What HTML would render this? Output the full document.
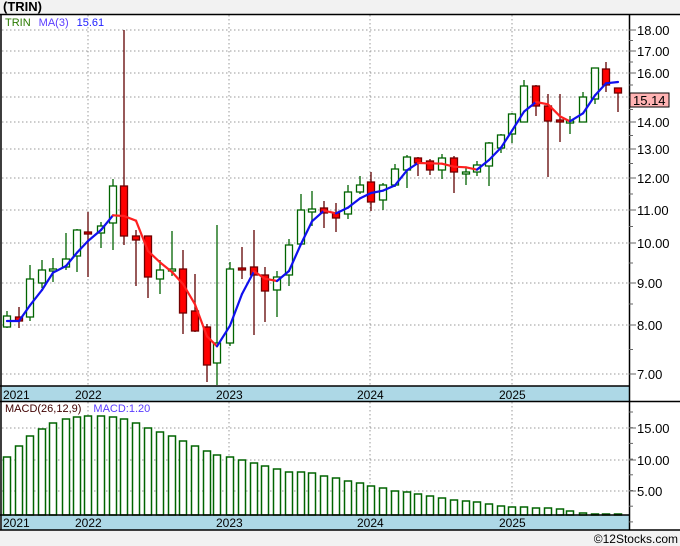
<!DOCTYPE html>
<html><head><meta charset="utf-8"><style>
body{margin:0;background:#f2f2f2;width:680px;height:546px;overflow:hidden;font-family:"Liberation Sans",sans-serif}
svg{position:absolute;left:0;top:0}
</style></head><body>
<svg id="s" width="680" height="546" xmlns="http://www.w3.org/2000/svg" font-family="Liberation Sans, sans-serif">
<rect x="0" y="0" width="680" height="14" fill="#f2f2f2"/>
<text x="3" y="11" font-size="13" font-weight="bold" fill="#000">(TRIN)</text>
<rect x="1" y="14" width="679" height="516" fill="#fff"/>
<g id="grid" stroke="#999" stroke-dasharray="1.5,2.5" stroke-width="1"></g>
<rect x="2" y="386" width="627" height="15" fill="#add8e6"/>
<rect x="2" y="515" width="627" height="15" fill="#add8e6"/>
<g id="bars"></g>
<g id="candles"></g>
<g id="ma"></g>
<g stroke="#000" stroke-width="1.5" fill="none">
<line x1="0" y1="14.5" x2="680" y2="14.5"/>
<line x1="1" y1="14" x2="1" y2="530"/>
<line x1="629.5" y1="14" x2="629.5" y2="530"/>
<line x1="0" y1="386" x2="629" y2="386"/>
<line x1="0" y1="401.5" x2="680" y2="401.5"/>
<line x1="0" y1="515" x2="629" y2="515"/>
<line x1="0" y1="530" x2="680" y2="530"/>
</g>
<g id="ticks" stroke="#666" stroke-width="1"></g>
<g font-size="13" fill="#000" id="labels"></g>
<g font-size="12" fill="#000">
<text x="3" y="399">2021</text><text x="75" y="399">2022</text><text x="216" y="399">2023</text><text x="357" y="399">2024</text><text x="499" y="399">2025</text>
<text x="3" y="527">2021</text><text x="75" y="527">2022</text><text x="216" y="527">2023</text><text x="357" y="527">2024</text><text x="499" y="527">2025</text>
</g>
<text x="5" y="26" font-size="11"><tspan fill="#2a7a00">TRIN</tspan><tspan fill="#5a3cff" dx="8">MA(3)</tspan><tspan fill="#2020ff" dx="8">15.61</tspan></text>
<text x="5" y="412" font-size="11"><tspan fill="#400000">MACD(26,12,9)</tspan><tspan fill="#5a3cff" dx="12">MACD:1.20</tspan></text>
<rect x="630" y="93" width="39" height="14" fill="#ffb3b3" stroke="#000" stroke-width="1"/>
<text x="633" y="105" font-size="13" fill="#000">15.14</text>
<text x="678" y="543" font-size="12" fill="#000" text-anchor="end">©12Stocks.com</text>
</svg>
<script>
var NS="http://www.w3.org/2000/svg";
function el(p,t,a){var e=document.createElementNS(NS,t);for(var k in a)e.setAttribute(k,a[k]);document.getElementById(p).appendChild(e);return e;}
var py={18:30,17:51,16:73,15:97,14:122,13:149,12:178,11:210,10:243,9:283,8:325,7:374};
for(var v in py){var y=py[v];el('grid','line',{x1:2,x2:629,y1:y,y2:y});
el('ticks','line',{x1:629,x2:636,y1:y,y2:y});
if(v!=15)el('labels','text',{x:637,y:y+5}).textContent=v+".00";}
[[18,30],[17,51],[16,73],[15,97],[14,122],[13,149],[12,178],[11,210],[10,243],[9,283],[8,325],[7,374]].forEach(function(a,i,arr){if(i<arr.length-1){var m=(a[1]+arr[i+1][1])/2;el('ticks','line',{x1:629,x2:633,y1:m,y2:m});}});
var my={15:428,10:460,5:491};
for(var v in my){el('grid','line',{x1:2,x2:629,y1:my[v],y2:my[v]});el('ticks','line',{x1:629,x2:636,y1:my[v],y2:my[v]});el('labels','text',{x:637,y:my[v]+5}).textContent=v+".00";}
for(var y=412;y<530;y+=15.7){el('ticks','line',{x1:629,x2:633,y1:y,y2:y});}
[88,229,370,512].forEach(function(x){el('grid','line',{x1:x,x2:x,y1:15,y2:386});el('grid','line',{x1:x,x2:x,y1:402,y2:515});});
// candles: x, open, close, high, low (pixel y)
var C=[[7,327,316,311,328],[19,317,321,307,328],[30,317,279,265,321],[42,283,270,260,288],[53,269,269,258,282],[66,267,259,233,270],[77,256,230,229,272],[88,232,234,212,277],[101,233,226,222,248],[113,223,186,179,250],[124,186,236,30,245],[136,236,240,230,286],[148,236,277,236,298],[160,279,270,260,294],[172,271,269,231,276],[183,269,313,250,334],[195,311,331,274,332],[207,327,365,324,382],[217,363,343,225,385],[230,343,269,262,346],[242,268,270,247,279],[254,267,275,230,335],[265,275,291,267,322],[277,290,277,271,317],[289,275,245,239,286],[301,244,210,194,244],[312,212,209,191,226],[324,208,213,201,228],[336,213,218,203,232],[348,214,192,185,219],[360,192,185,176,194],[371,182,202,172,211],[383,200,185,183,210],[395,185,169,164,187],[407,170,157,155,188],[418,158,163,157,176],[430,161,170,159,175],[442,170,158,154,179],[454,158,172,156,193],[466,172,172,168,185],[477,172,165,161,176],[489,166,143,142,186],[501,148,135,134,153],[512,134,114,113,143],[524,122,86,80,122],[536,86,106,85,116],[548,106,121,94,177],[560,120,122,94,142],[570,121,121,116,134],[583,122,97,92,122],[595,99,68,68,104],[606,69,85,62,92],[618,88,93,88,112]];
C.forEach(function(c){var red=c[2]>c[1];var col=red?"#600000":"#006400";
el('candles','line',{x1:c[0],x2:c[0],y1:c[3],y2:c[4],stroke:col,"stroke-width":1.3});
var t=Math.min(c[1],c[2]),h=Math.max(Math.abs(c[2]-c[1]),2);
el('candles','rect',{x:c[0]-3.5,y:t,width:7,height:h,fill:red?"#ff0000":"#fff",stroke:red?"#700000":"#006400","stroke-width":1.3});});
var M=[];for(var i=0;i<C.length;i++){var s=0,n=0;for(var j=Math.max(0,i-2);j<=i;j++){s+=C[j][2];n++;}M.push(i<2?321:s/n);}
for(var i=1;i<C.length;i++){el('ma','line',{x1:C[i-1][0],y1:M[i-1],x2:C[i][0],y2:M[i],stroke:M[i]>M[i-1]+0.3?"#ff2020":"#1010ee","stroke-width":2.2,"stroke-linecap":"round"});}
var T=[457,446,436,429,423,419,417,416,416,417,419,423,428,432,436,441,446,451,455,457,460,463,466,469,472,472,473,476,478,481,483,486,488,491,492,494,496,498,500,501,502,504,506,507,507,508,508,509,511,513,514,514,514];
C.forEach(function(c,i){var t=T[i];el('bars','rect',{x:c[0]-3.5,y:t,width:7,height:515-t,fill:"#fff",stroke:"#006400","stroke-width":1.5});});
</script>
</body></html>
